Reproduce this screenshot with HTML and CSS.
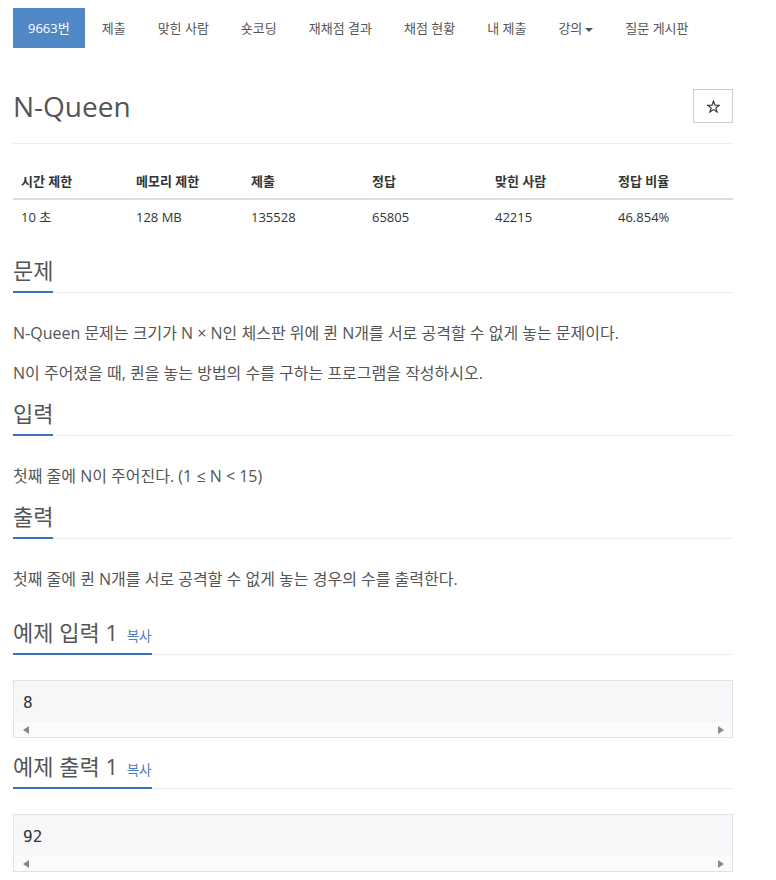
FILE: index.html
```html
<!DOCTYPE html>
<html lang="ko">
<head>
<meta charset="utf-8">
<title>N-Queen</title>
<link rel="stylesheet" href="styles.css">
</head>
<body>
<div class="page">
  <ul class="nav">
    <li class="active"><a>9663번</a></li>
    <li><a>제출</a></li>
    <li><a>맞힌 사람</a></li>
    <li><a>숏코딩</a></li>
    <li><a>재채점 결과</a></li>
    <li><a>채점 현황</a></li>
    <li><a>내 제출</a></li>
    <li><a>강의<span class="caret"></span></a></li>
    <li><a>질문 게시판</a></li>
  </ul>

  <div class="page-header">
    <h1>N-Queen</h1>
    <button class="star-btn" type="button" aria-label="즐겨찾기">
      <svg class="star" width="13" height="13" viewBox="-0.5 -0.5 13 13" aria-hidden="true">
        <polygon points="6,0.6 7.47,4.58 11.71,4.75 8.38,7.37 9.53,11.45 6,9.1 2.47,11.45 3.62,7.37 0.29,4.75 4.53,4.58" fill="none" stroke="#333" stroke-width="1.2" stroke-linejoin="miter"/>
      </svg>
    </button>
  </div>

  <table class="info">
    <thead>
      <tr>
        <th class="c1">시간 제한</th>
        <th class="c2">메모리 제한</th>
        <th class="c3">제출</th>
        <th class="c4">정답</th>
        <th class="c5">맞힌 사람</th>
        <th class="c6">정답 비율</th>
      </tr>
    </thead>
    <tbody>
      <tr>
        <td>10 초</td>
        <td>128 MB</td>
        <td>135528</td>
        <td>65805</td>
        <td>42215</td>
        <td>46.854%</td>
      </tr>
    </tbody>
  </table>

  <section class="sec">
    <div class="headline"><h2>문제</h2></div>
    <p>N-Queen 문제는 크기가 N × N인 체스판 위에 퀸 N개를 서로 공격할 수 없게 놓는 문제이다.</p>
    <p>N이 주어졌을 때, 퀸을 놓는 방법의 수를 구하는 프로그램을 작성하시오.</p>
  </section>

  <section class="sec">
    <div class="headline"><h2>입력</h2></div>
    <p>첫째 줄에 N이 주어진다. (1 ≤ N &lt; 15)</p>
  </section>

  <section class="sec">
    <div class="headline"><h2>출력</h2></div>
    <p>첫째 줄에 퀸 N개를 서로 공격할 수 없게 놓는 경우의 수를 출력한다.</p>
  </section>

  <section class="sample">
    <div class="headline"><h2>예제 입력 1 <span class="copy">복사</span></h2></div>
    <div class="sample-box">
      <pre>8</pre>
      <div class="hscroll"><span class="arr-l"></span><span class="arr-r"></span></div>
    </div>
  </section>

  <section class="sample">
    <div class="headline"><h2>예제 출력 1 <span class="copy">복사</span></h2></div>
    <div class="sample-box">
      <pre>92</pre>
      <div class="hscroll"><span class="arr-l"></span><span class="arr-r"></span></div>
    </div>
  </section>
</div>
</body>
</html>
```

FILE: styles.css
```css
html, body {
  margin: 0;
  padding: 0;
  background: #fff;
}

body {
  font-family: "Open Sans", "Noto Sans CJK KR", sans-serif;
  color: #555;
}

.page {
  width: 720px;
  margin-left: 13px;
  padding-top: 8px;
  display: flex;
  flex-direction: column;
}

/* nav pills */
.nav {
  list-style: none;
  margin: 0;
  padding: 0;
  display: flex;
  gap: 2px;
}

.nav a {
  display: block;
  padding: 10px 15px;
  font-size: 13px;
  line-height: 20px;
  color: #555;
}

.nav .active a {
  background: #5087c7;
  color: #fff;
}

.caret {
  display: inline-block;
  width: 0;
  height: 0;
  margin-left: 3px;
  vertical-align: middle;
  border-top: 4px solid #555;
  border-left: 4px solid transparent;
  border-right: 4px solid transparent;
}

/* header */
.page-header {
  display: flex;
  justify-content: space-between;
  align-items: center;
  margin-top: 41px;
  padding-bottom: 20px;
  border-bottom: 1px solid #eee;
}

.page-header h1 {
  margin: 0;
  font-size: 28px;
  font-weight: 400;
  line-height: 34px;
  color: #555;
}

.star-btn {
  width: 40px;
  height: 34px;
  padding: 0;
  border: 1px solid #ccc;
  border-radius: 0;
  background: #fff;
  display: flex;
  align-items: center;
  justify-content: center;
}

.star {
  display: block;
}

/* info table */
.info {
  width: 720px;
  border-collapse: collapse;
  margin: 19px 0 20px;
}

.info th {
  text-align: left;
  font-size: 13px;
  font-weight: 700;
  line-height: 20px;
  color: #333;
  padding: 8px 8px 7px;
  border-bottom: 2px solid #ddd;
}

.info td {
  font-size: 13px;
  line-height: 20px;
  color: #333;
  padding: 7px 8px 8px;
}

.c1 { width: 99px; }
.c2 { width: 99px; }
.c3 { width: 105px; }
.c4 { width: 107px; }
.c5 { width: 107px; }
.c6 { width: 107px; }

/* sections */
.sec, .sample {
  display: flex;
  flex-direction: column;
}

.headline {
  display: flex;
  border-bottom: 1px dotted #ddd;
  margin-bottom: 25px;
}

.headline h2 {
  margin: 0 0 -1px;
  padding-top: 2px;
  padding-bottom: 8px;
  border-bottom: 2px solid #3673b9;
  font-size: 22px;
  font-weight: 400;
  line-height: 26px;
  color: #555;
}

.copy {
  font-size: 13.5px;
  line-height: 16px;
  color: #4a80c2;
  margin-left: 3px;
}

.sec p {
  margin: 0 0 10px;
  font-size: 16px;
  line-height: 30px;
}

.sample {
  margin-top: 13px;
}

.sample-box {
  border: 1px solid #e1e1e8;
  background: #f7f7f9;
}

.sample-box pre {
  margin: 0;
  padding: 12px 9px 9px;
  font-family: "DejaVu Sans Mono", monospace;
  font-size: 16px;
  line-height: 20px;
  color: #333;
}

.hscroll {
  height: 15px;
  background: #fbfbfb;
  display: flex;
  justify-content: space-between;
  align-items: center;
  padding: 0 8px 0 9px;
}

.arr-l {
  width: 0;
  height: 0;
  border-top: 4px solid transparent;
  border-bottom: 4px solid transparent;
  border-right: 6px solid #888;
}

.arr-r {
  width: 0;
  height: 0;
  border-top: 4px solid transparent;
  border-bottom: 4px solid transparent;
  border-left: 6px solid #888;
}
```
